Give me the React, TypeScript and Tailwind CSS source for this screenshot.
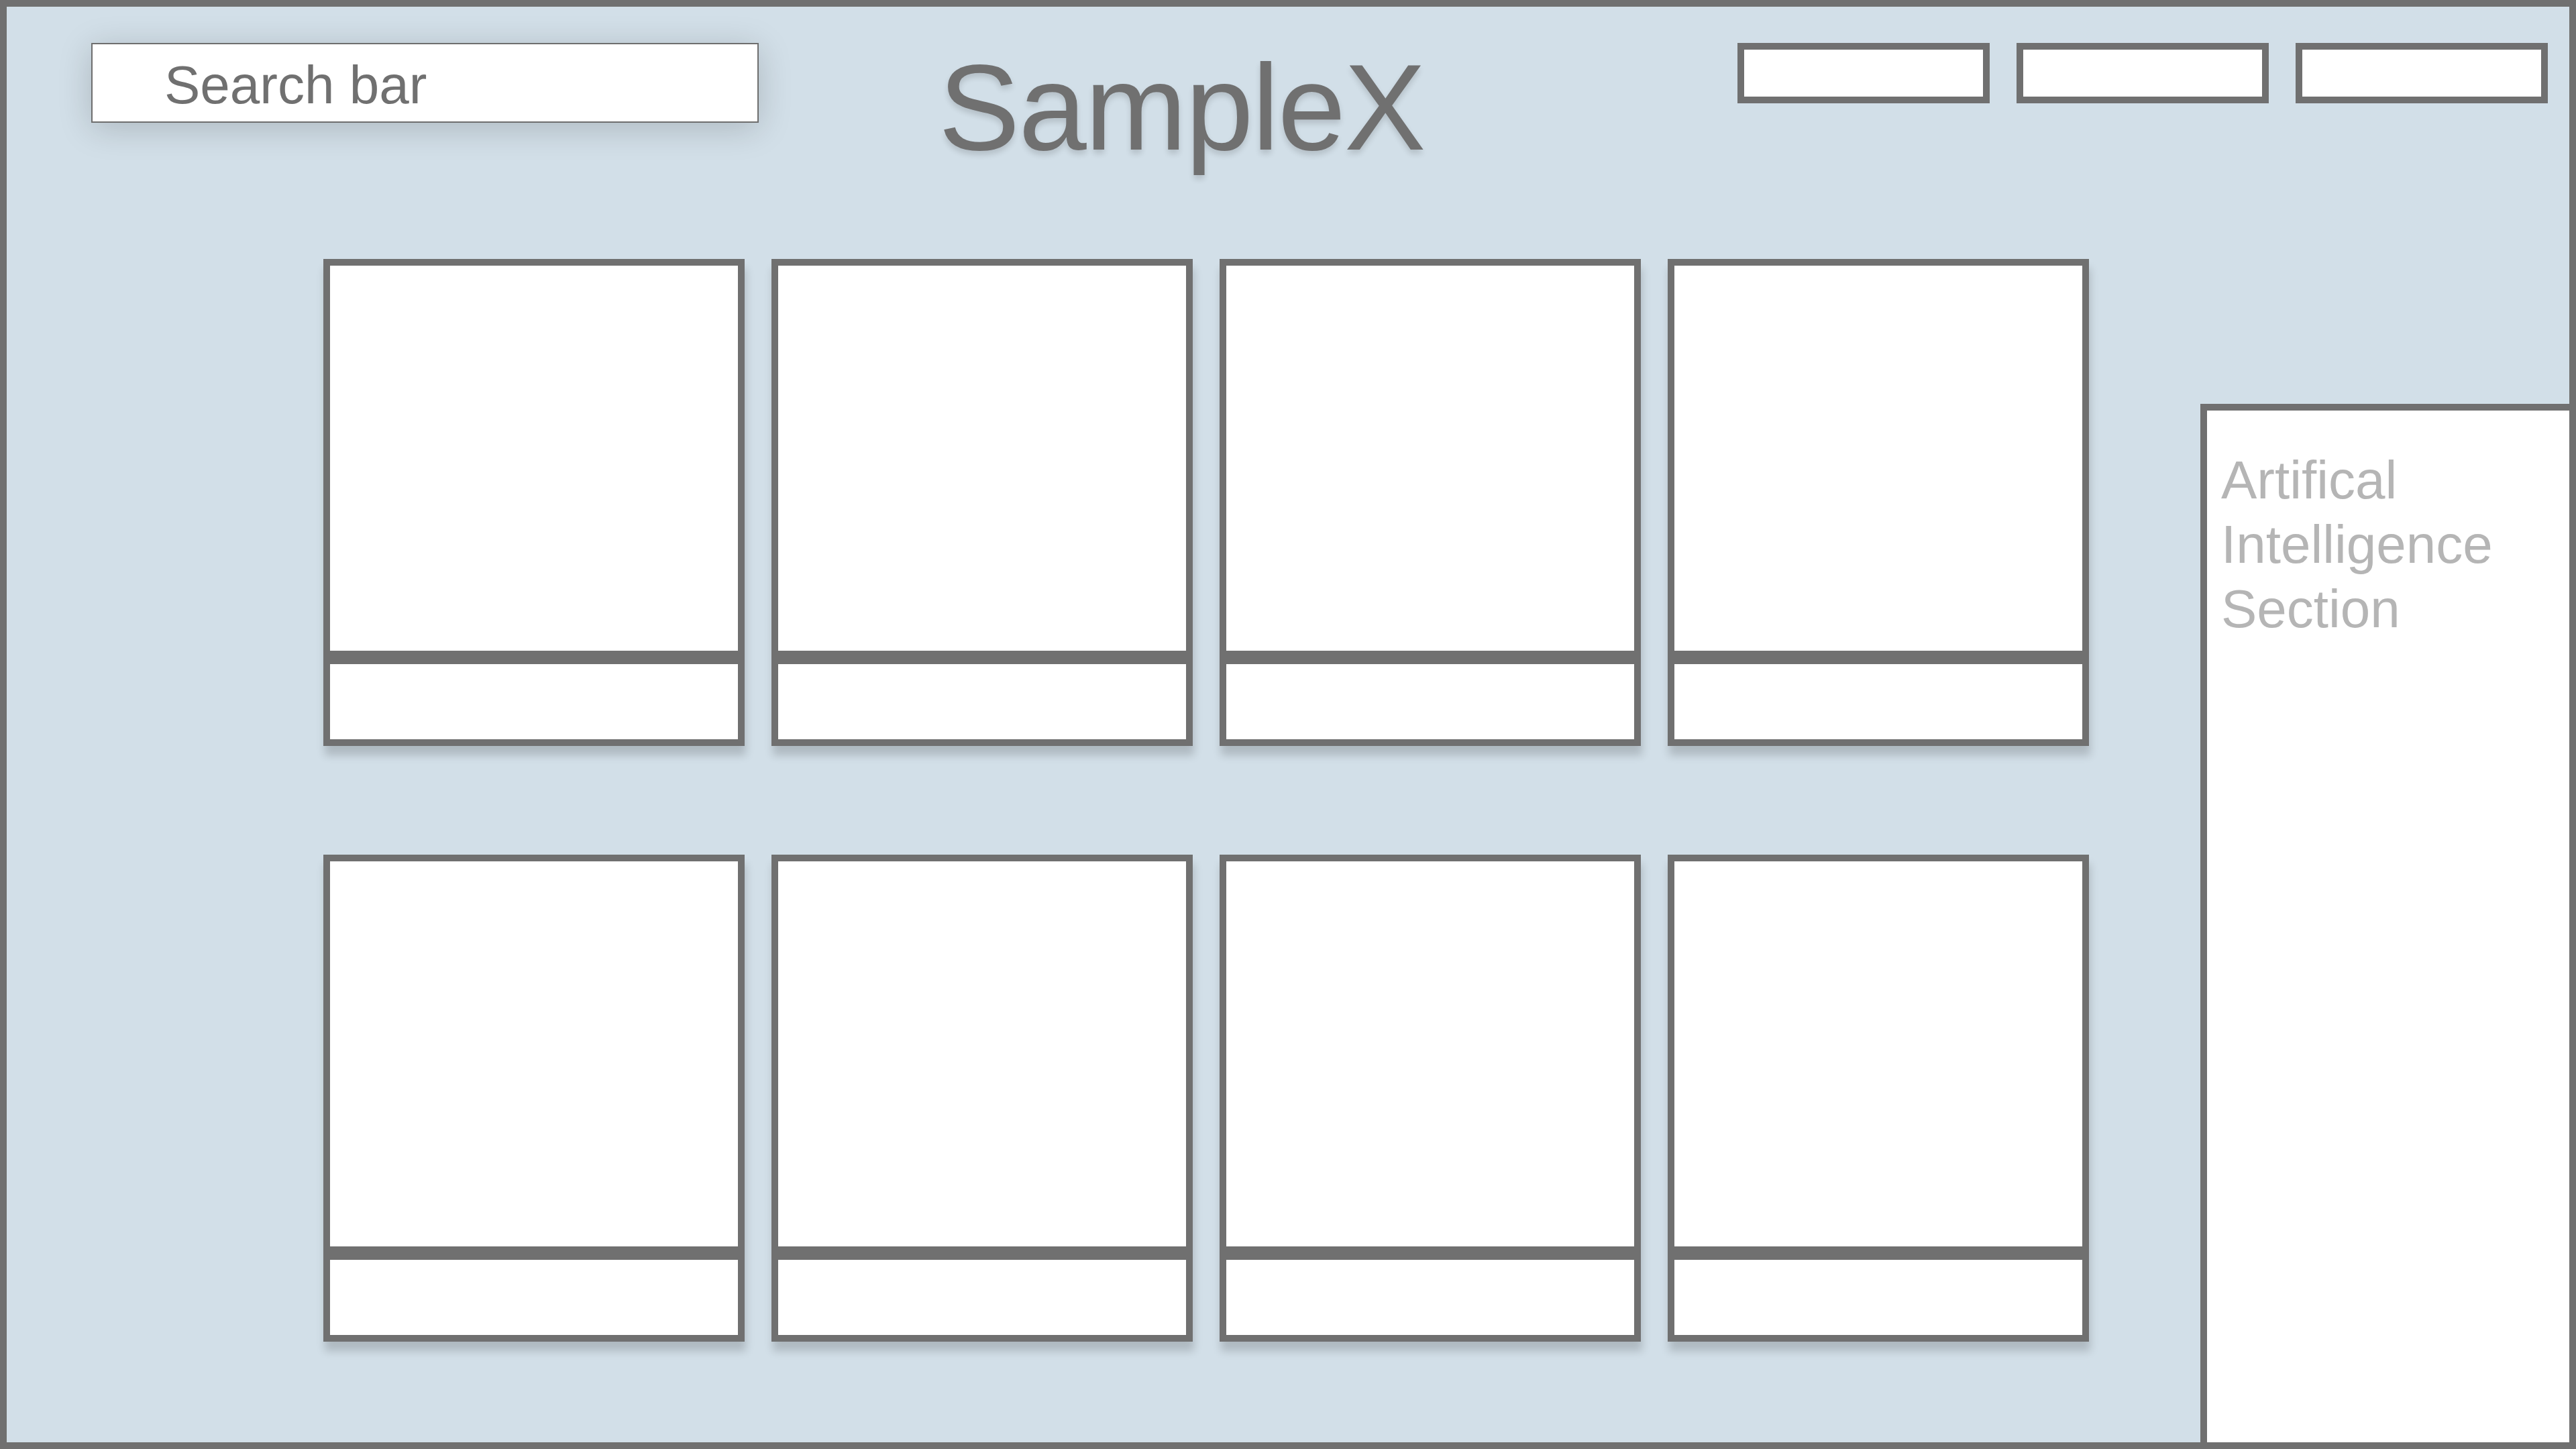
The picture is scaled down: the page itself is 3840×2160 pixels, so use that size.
import React from "react";

const font = "font-['Liberation_Sans','Helvetica_Neue',Arial,sans-serif]";

function Card() {
  return (
    <div className="flex h-[726px] w-[628px] flex-col border-[10px] border-[#707070] bg-white shadow-[2px_14px_12px_rgba(0,0,0,0.17)]">
      <div className="flex-1 bg-white" />
      <div className="h-[20px] bg-[#707070]" />
      <div className="h-[112px] bg-white" />
    </div>
  );
}

function NavButton() {
  return <div className="h-[90px] w-[376px] border-[10px] border-[#707070] bg-white" />;
}

export default function App() {
  const cards = Array.from({ length: 8 }, (_, i) => i);

  return (
    <div className={`flex h-[2160px] w-[3840px] flex-col overflow-hidden border-[10px] border-[#707070] bg-[#d2dfe8] ${font}`}>
      {/* header */}
      <header className="flex h-[376px] shrink-0 items-start">
        <div className="ml-[126px] mt-[54px] flex h-[119px] w-[995px] items-center border-2 border-[#6e6e6e] bg-white pl-[107px] pt-[6px] shadow-[0_8px_50px_rgba(0,0,0,0.18)]">
          <span className="text-[80px] leading-none text-[#707070]">Search bar</span>
        </div>
        <h1 className="ml-[268px] mt-[59px] text-[182px] leading-none tracking-[-2px] text-[#707070] [text-shadow:0_6px_8px_rgba(0,0,0,0.14)]">
          SampleX
        </h1>
        <nav className="ml-auto mr-[32px] mt-[54px] flex gap-[40px]">
          <NavButton />
          <NavButton />
          <NavButton />
        </nav>
      </header>

      {/* body */}
      <main className="flex flex-1 items-start">
        <div className="ml-[472px] grid grid-cols-[repeat(4,628px)] gap-x-[40px] gap-y-[162px]">
          {cards.map((i) => (
            <Card key={i} />
          ))}
        </div>
        <aside className="ml-auto mt-[216px] w-[550px] self-stretch border-l-[10px] border-t-[10px] border-[#707070] bg-white pl-[21px] pt-[56px]">
          <p className="text-[80px] leading-[96px] text-[#b5b5b5]">
            Artifical
            <br />
            Intelligence
            <br />
            Section
          </p>
        </aside>
      </main>
    </div>
  );
}
